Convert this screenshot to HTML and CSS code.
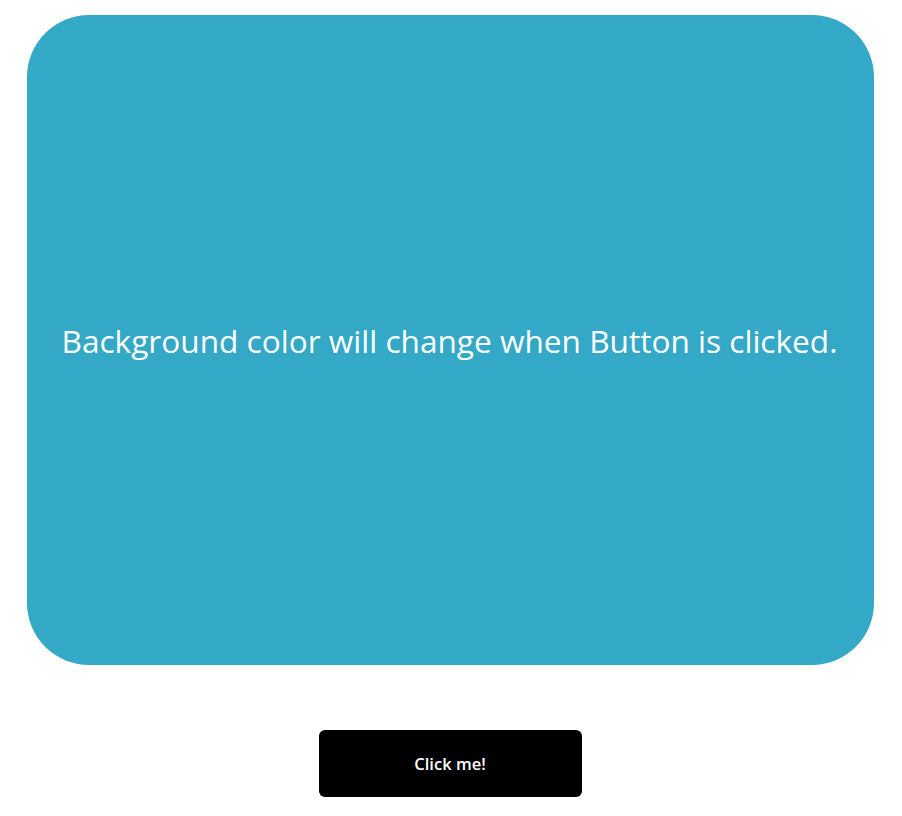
FILE: index.html
```html
<!DOCTYPE html>
<html>
<head>
<meta charset="utf-8">
<link rel="stylesheet" href="styles.css">
</head>
<body>
<div class="page">
  <div class="panel">
    <p class="message">Background color will change when Button is clicked.</p>
  </div>
  <button class="btn">Click me!</button>
</div>
</body>
</html>
```
FILE: styles.css
```css
html, body {
  margin: 0;
  padding: 0;
  background: #ffffff;
}
.page {
  display: flex;
  flex-direction: column;
  align-items: center;
  padding-top: 15px;
  font-family: "Open Sans", "Noto Sans", sans-serif;
}
.panel {
  width: 847px;
  height: 650px;
  margin-left: -1px;
  background: #33a8c7;
  border-radius: 62px;
  display: flex;
  align-items: center;
  justify-content: center;
}
.message {
  margin: 0;
  color: #ffffff;
  font-size: 31.6px;
  transform: translateX(-1px);
}
.btn {
  margin-top: 65px;
  margin-left: -1px;
  margin-right: 1px;
  width: 263px;
  height: 67px;
  background: #000000;
  color: #ffffff;
  border: none;
  border-radius: 6px;
  font-family: "Open Sans", "Noto Sans", sans-serif;
  font-weight: 600;
  font-size: 16.5px;
  cursor: pointer;
}
```
